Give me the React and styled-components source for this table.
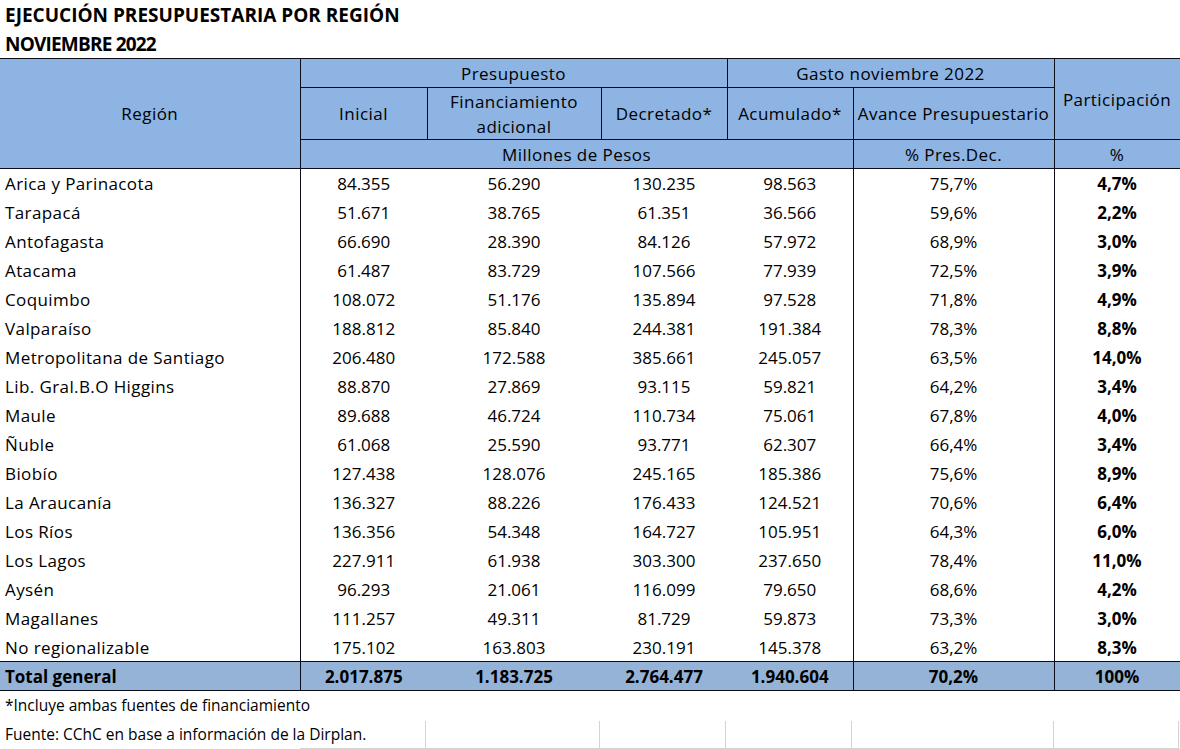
import styled, { createGlobalStyle } from "styled-components"

const GlobalStyle = createGlobalStyle`
body {
  margin: 0;
  background: #fff;
  font-family: "Open Sans", Lato, sans-serif;
  color: #000;
}
`;

const COLS = [300, 127, 174, 126, 126, 201, 126];

const rows = [
  ["Arica y Parinacota", "84.355", "56.290", "130.235", "98.563", "75,7%", "4,7%"],
  ["Tarapacá", "51.671", "38.765", "61.351", "36.566", "59,6%", "2,2%"],
  ["Antofagasta", "66.690", "28.390", "84.126", "57.972", "68,9%", "3,0%"],
  ["Atacama", "61.487", "83.729", "107.566", "77.939", "72,5%", "3,9%"],
  ["Coquimbo", "108.072", "51.176", "135.894", "97.528", "71,8%", "4,9%"],
  ["Valparaíso", "188.812", "85.840", "244.381", "191.384", "78,3%", "8,8%"],
  ["Metropolitana de Santiago", "206.480", "172.588", "385.661", "245.057", "63,5%", "14,0%"],
  ["Lib. Gral.B.O Higgins", "88.870", "27.869", "93.115", "59.821", "64,2%", "3,4%"],
  ["Maule", "89.688", "46.724", "110.734", "75.061", "67,8%", "4,0%"],
  ["Ñuble", "61.068", "25.590", "93.771", "62.307", "66,4%", "3,4%"],
  ["Biobío", "127.438", "128.076", "245.165", "185.386", "75,6%", "8,9%"],
  ["La Araucanía", "136.327", "88.226", "176.433", "124.521", "70,6%", "6,4%"],
  ["Los Ríos", "136.356", "54.348", "164.727", "105.951", "64,3%", "6,0%"],
  ["Los Lagos", "227.911", "61.938", "303.300", "237.650", "78,4%", "11,0%"],
  ["Aysén", "96.293", "21.061", "116.099", "79.650", "68,6%", "4,2%"],
  ["Magallanes", "111.257", "49.311", "81.729", "59.873", "73,3%", "3,0%"],
  ["No regionalizable", "175.102", "163.803", "230.191", "145.378", "63,2%", "8,3%"],
];

const total = ["Total general", "2.017.875", "1.183.725", "2.764.477", "1.940.604", "70,2%", "100%"];

// columns with a black line on their right side in the body
const RULED = [0, 4, 5, 6];

const Page = styled.div`
width: 1180px;
`;

const Title = styled.div`
height: 29px;
line-height: 30px;
padding-left: 5px;
font-weight: 700;
font-size: 19px;
letter-spacing: ${props => props.tight ? "-0.8px" : "0"};
white-space: nowrap;
`;

const Table = styled.table`
border-collapse: collapse;
table-layout: fixed;
width: 1180px;
font-size: 17px;
`;

const HeadRow = styled.tr`
height: ${props => props.h}px;
`;

const Th = styled.th`
background: #8db4e2;
font-weight: 400;
letter-spacing: 0.45px;
border: 1px solid #0d0d1a;
border-left: ${props => props.first ? "none" : "1px solid #0d0d1a"};
padding: 0 2px;
line-height: 25px;
text-align: center;
vertical-align: middle;
white-space: nowrap;
`;

const Row = styled.tr`
height: 29px;
background: ${props => props.total ? "#95b3d7" : "#fff"};
font-weight: ${props => props.total ? 700 : 400};
& td {
  border-top: ${props => props.total ? "1px solid #0d0d1a" : "none"};
  border-bottom: ${props => props.total ? "1px solid #0d0d1a" : "none"};
}
`;

const Td = styled.td`
padding: 1px 0 0 ${props => props.left ? "5px" : "0"};
text-align: ${props => props.left ? "left" : "center"};
font-weight: ${props => props.bold ? 700 : "inherit"};
letter-spacing: ${props => props.spaced ? "0.4px" : "0"};
border-right: ${props => props.ruled ? "1px solid #0d0d1a" : "none"};
white-space: nowrap;
vertical-align: middle;
`;

const Note = styled.div`
height: 29px;
line-height: 29px;
padding-left: 5px;
font-size: 15.5px;
white-space: nowrap;
`;

const GridRow = styled.div`
display: flex;
height: 29px;
font-size: 15.5px;
`;

const GridCell = styled.div`
flex: 0 0 ${props => props.w}px;
width: ${props => props.w}px;
min-width: 0;
box-sizing: border-box;
line-height: 29px;
padding-left: ${props => props.text ? "5px" : "0"};
white-space: nowrap;
overflow: visible;
margin-top: ${props => props.text ? "0" : "1px"};
border-right: ${props => props.line ? "1px solid #d4d4d4" : "none"};
border-bottom: ${props => props.text ? "none" : "1px solid #d4d4d4"};
`;

const App = () => {
  return (
    <Page>
      <GlobalStyle />
      <Title>EJECUCIÓN PRESUPUESTARIA POR REGIÓN</Title>
      <Title tight>NOVIEMBRE 2022</Title>
      <Table>
        <colgroup>
          {COLS.map((w, i) => <col key={i} style={{ width: w }} />)}
        </colgroup>
        <thead>
          <HeadRow h={29}>
            <Th first rowSpan={3}>Región</Th>
            <Th colSpan={3}>Presupuesto</Th>
            <Th colSpan={2}>Gasto noviembre 2022</Th>
            <Th rowSpan={2}>Participación</Th>
          </HeadRow>
          <HeadRow h={52}>
            <Th>Inicial</Th>
            <Th>Financiamiento<br />adicional</Th>
            <Th>Decretado*</Th>
            <Th>Acumulado*</Th>
            <Th>Avance Presupuestario</Th>
          </HeadRow>
          <HeadRow h={29}>
            <Th colSpan={4}>Millones de Pesos</Th>
            <Th>% Pres.Dec.</Th>
            <Th>%</Th>
          </HeadRow>
        </thead>
        <tbody>
          {rows.map(r => (
            <Row key={r[0]}>
              {r.map((v, i) => (
                <Td key={i} left={i === 0} spaced={i === 0} bold={i === 6} ruled={RULED.includes(i)}>{v}</Td>
              ))}
            </Row>
          ))}
          <Row total>
            {total.map((v, i) => (
              <Td key={i} left={i === 0} ruled={RULED.includes(i)}>{v}</Td>
            ))}
          </Row>
        </tbody>
      </Table>
      <Note>*Incluye ambas fuentes de financiamiento</Note>
      <GridRow>
        <GridCell w={300} text>Fuente: CChC en base a información de la Dirplan.</GridCell>
        <GridCell w={126} line />
        <GridCell w={174} line />
        <GridCell w={126} line />
        <GridCell w={126} line />
        <GridCell w={202} line />
        <GridCell w={125} line />
      </GridRow>
    </Page>
  )
}

export default App
